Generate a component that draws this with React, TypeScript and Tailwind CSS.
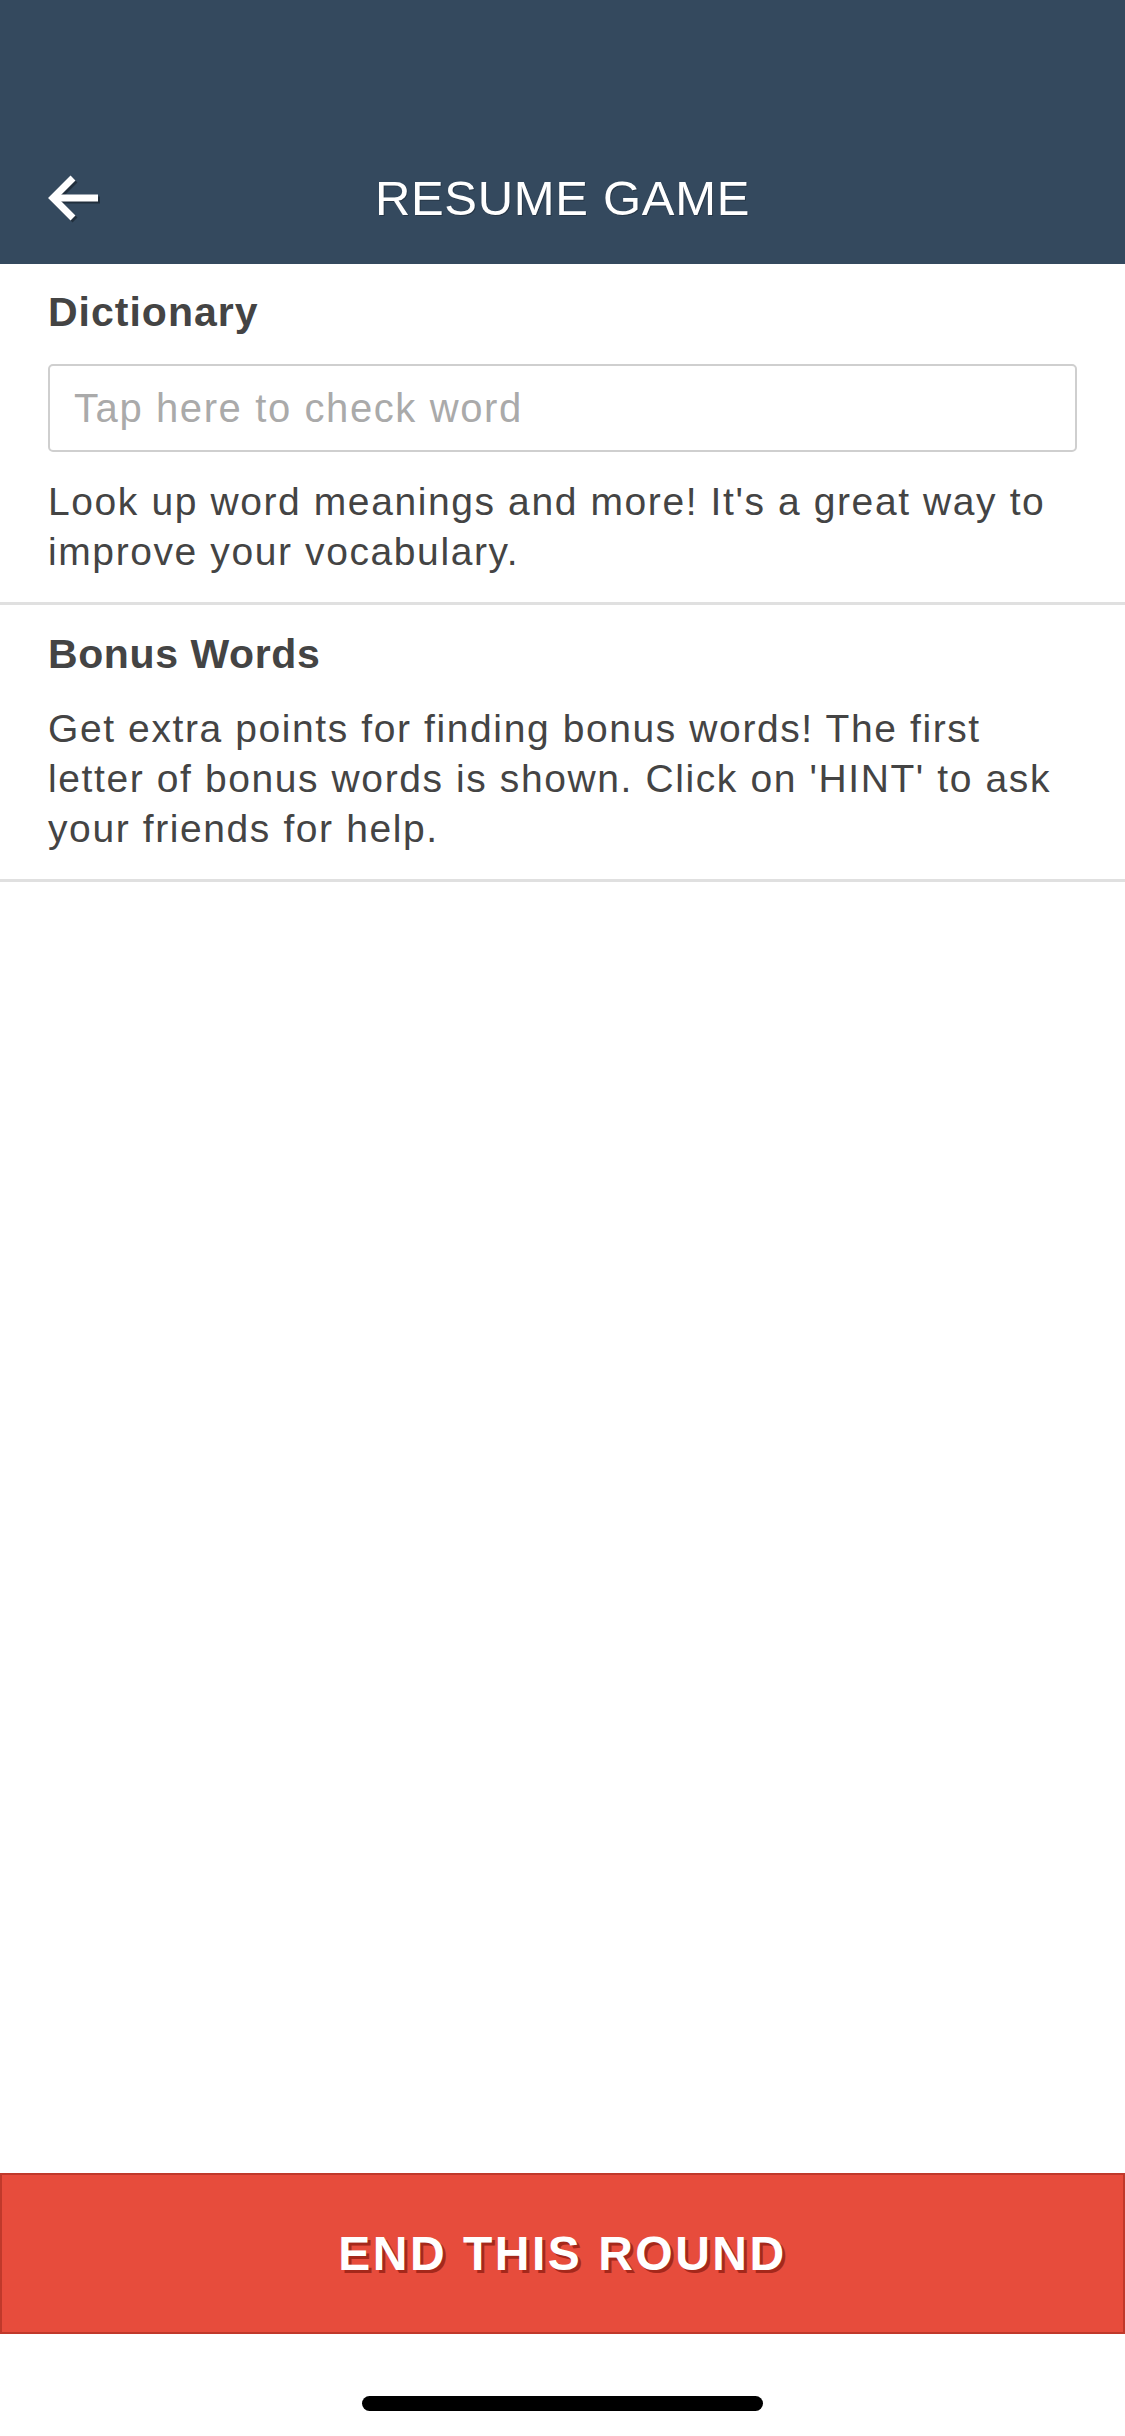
const BackArrow = () => (
  <svg width="56" height="50" viewBox="0 0 56 50" fill="none" className="drop-shadow-[2px_2px_0_rgba(0,0,0,0.35)]">
    <path d="M52 25 H8" stroke="#fff" strokeWidth="7" />
    <path d="M27 5 L7 25 L27 45" stroke="#fff" strokeWidth="7" strokeLinejoin="miter" />
  </svg>
);

export default function App() {
  return (
    <div className="flex h-[2436px] w-[1125px] flex-col bg-white font-['Liberation_Sans',Arial,sans-serif] text-[#444]">
      <header className="bg-[#34495e] pt-[132px]">
        <div className="relative flex h-[132px] items-center justify-center">
          <button className="absolute left-[46px] top-[41px]">
            <BackArrow />
          </button>
          <h1 className="text-[49px] leading-none tracking-[0.7px] text-white [text-shadow:1px_1px_0_rgba(0,0,0,0.25)]">
            RESUME GAME
          </h1>
        </div>
      </header>

      <section className="border-b-[3px] border-[#e0e0e0] px-12 pb-[25px] pt-[23px]">
        <h2 className="text-[41px] font-bold leading-[50px] tracking-[1px]">Dictionary</h2>
        <input
          type="text"
          placeholder="Tap here to check word"
          className="mt-[27px] block h-[88px] w-full rounded-[5px] border-2 border-[#cfcfcf] px-6 text-[40px] tracking-[1.6px] text-[#444] outline-none placeholder:text-[#aaa]"
        />
        <p className="mt-[25px] text-[39px] leading-[50px] tracking-[1.6px]">
          Look up word meanings and more! It's a great way to improve your vocabulary.
        </p>
      </section>

      <section className="border-b-[3px] border-[#e0e0e0] px-12 pb-[25px] pt-[24px]">
        <h2 className="text-[41px] font-bold leading-[50px] tracking-[0.6px]">Bonus Words</h2>
        <p className="mt-[25px] text-[39px] leading-[50px] tracking-[1.6px]">
          Get extra points for finding bonus words! The first letter of bonus words is shown. Click on 'HINT' to ask
          your friends for help.
        </p>
      </section>

      <div className="flex-1" />

      <button className="flex h-[161px] w-full items-center justify-center border-2 border-[#c0392b] bg-[#e74c3c]">
        <span className="text-[48px] font-bold tracking-[2.5px] text-white [text-shadow:3px_3px_0_#a5281b]">
          END THIS ROUND
        </span>
      </button>

      <div className="flex h-[102px] items-start justify-center pt-[62px]">
        <div className="h-[15px] w-[401px] rounded-full bg-black" />
      </div>
    </div>
  );
}
